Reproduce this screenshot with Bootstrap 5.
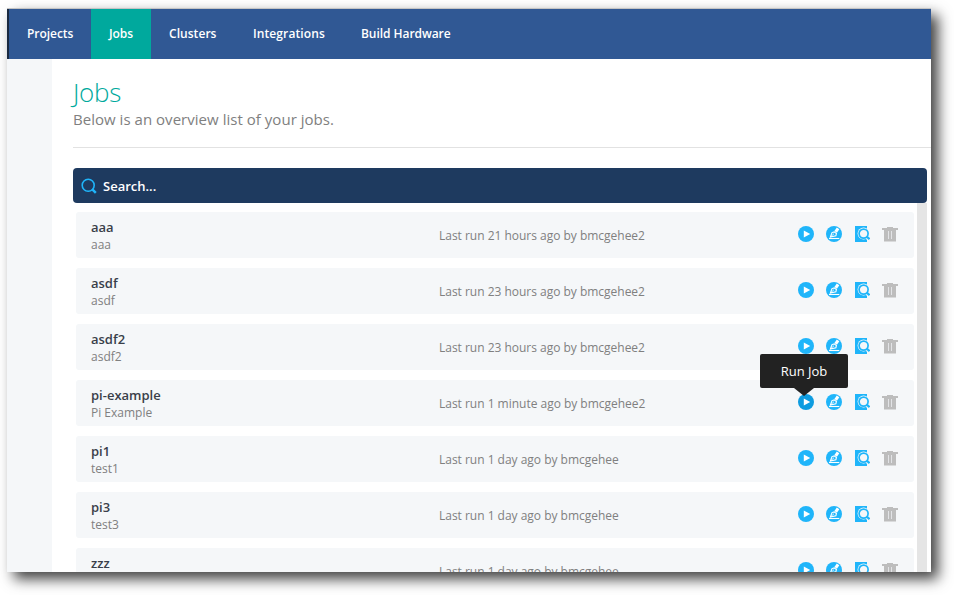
<!DOCTYPE html>
<html lang="en">
<head>
<meta charset="utf-8">
<title>Jobs</title>
<link href="https://cdn.jsdelivr.net/npm/bootstrap@5.3.0/dist/css/bootstrap.min.css" rel="stylesheet">
<style>
body{font-family:"Open Sans","Noto Sans",sans-serif;background:#fff;height:595px;overflow:hidden;font-size:12px;color:#808080}
.window-frame{width:924px;height:564px;margin:8px 0 0 7px;box-shadow:7px 7px 13px rgba(0,0,0,.75);background:#fff}
.topbar{height:51px;background:#305894;border-top:1px solid #c4c4c4}
.topbar .nav{border-left:2px solid #1b2a41;height:50px}
.topbar .nav-link{color:#fff;font-weight:600;padding:1px 0 0 18px;line-height:48px;height:50px;font-size:12px;white-space:nowrap;letter-spacing:-.05px}
.topbar .nav-link:nth-child(1){width:82px}
.topbar .nav-link:nth-child(2){width:60px}
.topbar .nav-link:nth-child(3){width:84px;letter-spacing:.05px}
.topbar .nav-link:nth-child(4){width:108px;letter-spacing:.1px}
.topbar .nav-link.active{background:#00a99d}
.side-strip{width:45px;background:#f5f7f9}
.page-area{padding-left:21px;min-width:0}
.page-title{font-size:26px;font-weight:300;color:#00a99d;line-height:32px;margin:17px 0 1px;letter-spacing:-.3px}
.page-sub{font-size:15px;line-height:20px;margin:0;padding-bottom:18px;border-bottom:1px solid #e2e2e2;letter-spacing:.03px}
.search-bar{height:35px;background:#1e3a5f;border-radius:4px;color:#fff;font-size:13px;font-weight:600;margin:20px 4px 0 0;padding-left:8px;gap:6px}
.search-bar span{padding-top:2px}
.job-scroll{margin-right:4px;border-right:10px solid #e5e5e5;padding:9px 3px 0 3px;gap:10px;min-height:0}
.job-row{height:46px;background:#f5f7f9;border-radius:3px;padding:0 16px 0 15px}
.job-id{width:348px;line-height:17px;padding-top:1px}
.job-name{font-size:13px;font-weight:600;color:#3a3f4a}
.job-run{padding-top:2px;letter-spacing:-.015px}
.job-actions{gap:12px;margin-top:-3px}
.job-actions .act{position:relative;width:16px;height:16px;color:#1fb5fa}
.job-actions .act.hot{color:#0e9ce0}
.job-actions svg{display:block}
.job-actions .act.bin{color:#bdbdbd}
.tip{position:absolute;left:-38px;top:-40px;width:88px;height:34px;background:#222;color:#fff;border-radius:2px;font-size:13px;line-height:34px;text-align:center;z-index:5}
.tip::after{content:"";position:absolute;left:34px;top:34px;border:10px solid transparent;border-top:8px solid #222;border-bottom:0}
</style>
</head>
<body>
<svg width="0" height="0" class="position-absolute">
<symbol id="i-run" viewBox="0 0 16 16"><circle cx="8" cy="8" r="8" fill="currentColor"/><path d="M5.8 4.4v7.2L12.2 8z" fill="#fff"/></symbol>
<symbol id="i-edit" viewBox="0 0 16 16"><circle cx="8" cy="8" r="8" fill="currentColor"/><path d="M4.4 11L6 6.600l2.200-.7 2.200 1.600-.5 2.200z" fill="none" stroke="#fff" stroke-width="1.1"/><path d="M4.500 10.900l3.500-3.200" stroke="#fff" stroke-width=".8"/><path d="M8.400 4.900L10.800 1.600l2.500 1.700-2.400 3.400z" fill="#fff"/><path d="M3 12.500h10.300" stroke="#fff" stroke-width="1.100"/></symbol>
<symbol id="i-view" viewBox="0 0 16 16"><path d="M1 0h12v16H1z" fill="currentColor"/><circle cx="9.600" cy="7.600" r="6" fill="#f5f7f9"/><path d="M12 10.500l3 2.500" stroke="#f5f7f9" stroke-width="4"/><circle cx="9.600" cy="7.600" r="4.500" fill="none" stroke="currentColor" stroke-width="1.700"/><path d="M12.600 10.600l3 2.500" stroke="currentColor" stroke-width="2.200"/></symbol>
<symbol id="i-bin" viewBox="0 0 16 16"><path d="M0 2h5V1h6v1h5v2h-2v11.500H2V4H0z" fill="currentColor"/><path d="M6.500 5v8M9.500 5v8" stroke="#e2e3e6" stroke-width="1"/></symbol>
</svg>
<div class="window-frame d-flex flex-column">
<header class="topbar flex-shrink-0">
<nav class="nav flex-nowrap">
<a class="nav-link" href="#">Projects</a><a class="nav-link active" href="#">Jobs</a><a class="nav-link" href="#">Clusters</a><a class="nav-link" href="#">Integrations</a><a class="nav-link" href="#">Build Hardware</a>
</nav>
</header>
<div class="d-flex flex-grow-1 overflow-hidden">
<aside class="side-strip flex-shrink-0"></aside>
<main class="page-area d-flex flex-column flex-grow-1">
<h1 class="page-title">Jobs</h1>
<p class="page-sub">Below is an overview list of your jobs.</p>
<div class="search-bar d-flex align-items-center flex-shrink-0"><svg width="16" height="16" viewBox="0 0 16 16" fill="none" stroke="#1fb5fa"><circle cx="7.2" cy="7.2" r="6" stroke-width="1.6"/><path d="M11.3 11.3l3.5 3.6" stroke-width="2.4"/></svg><span>Search...</span></div>
<div class="job-scroll d-flex flex-column flex-grow-1 overflow-hidden" id="jobs"></div>
</main>
</div>
</div>
<script src="https://cdn.jsdelivr.net/npm/bootstrap@5.3.0/dist/js/bootstrap.bundle.min.js"></script>
<script>
const jobs=[["aaa","aaa","21 hours ago by bmcgehee2"],["asdf","asdf","23 hours ago by bmcgehee2"],["asdf2","asdf2","23 hours ago by bmcgehee2"],["pi-example","Pi Example","1 minute ago by bmcgehee2"],["pi1","test1","1 day ago by bmcgehee"],["pi3","test3","1 day ago by bmcgehee"],["zzz","","1 day ago by bmcgehee"]];
const icon=n=>`<svg width="16" height="16"><use href="#i-${n}"/></svg>`;
document.getElementById("jobs").innerHTML=jobs.map(([name,desc,run])=>{
const hot=name==="pi-example";
return `<div class="job-row d-flex align-items-center flex-shrink-0"><div class="job-id"><div class="job-name">${name}</div><div>${desc||"&nbsp;"}</div></div><div class="job-run flex-grow-1">Last run ${run}</div><div class="job-actions d-flex"><span class="act${hot?" hot":""}">${icon("run")}${hot?'<span class="tip">Run Job</span>':""}</span><span class="act">${icon("edit")}</span><span class="act">${icon("view")}</span><span class="act bin">${icon("bin")}</span></div></div>`;}).join("");
</script>
</body>
</html>
